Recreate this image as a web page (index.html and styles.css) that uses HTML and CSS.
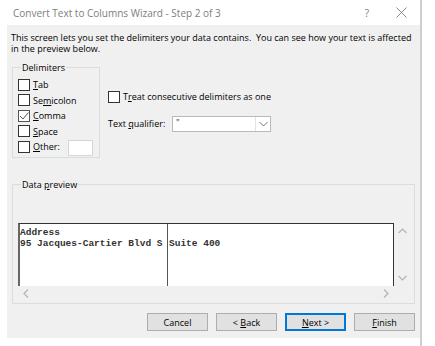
FILE: index.html
```html
<!DOCTYPE html>
<html lang="en">
<head>
  <meta charset="UTF-8">
  <title>Convert Text to Columns Wizard</title>
  <link rel="stylesheet" href="styles.css">
</head>
<body>
  <div class="screen">
    <div class="dialog">
      <!-- Title bar -->
      <div class="titlebar">
        <span class="title">Convert Text to Columns Wizard - Step 2 of 3</span>
        <span class="help">?</span>
        <svg class="close" width="11" height="11" viewBox="0 0 11 11">
          <path d="M0.5 0.5 L10.5 10.5 M10.5 0.5 L0.5 10.5" stroke="#8a8a8a" stroke-width="1" fill="none"/>
        </svg>
      </div>

      <div class="body">
        <p class="intro">This screen lets you set the delimiters your data contains.&nbsp; You can see how your text is affected in the preview below.</p>

        <div class="options">
          <fieldset class="group delims">
            <legend>Delimiters</legend>
            <div class="check"><span class="box"></span><span><u>T</u>ab</span></div>
            <div class="check"><span class="box"></span><span>Se<u>m</u>icolon</span></div>
            <div class="check"><span class="box checked">
              <svg width="10" height="10" viewBox="0 0 10 10"><path d="M1 5 L4 8 L9.5 1.5" stroke="#555" stroke-width="1" fill="none"/></svg>
            </span><span><u>C</u>omma</span></div>
            <div class="check"><span class="box"></span><span><u>S</u>pace</span></div>
            <div class="check"><span class="box"></span><span><u>O</u>ther:</span><span class="other-input"></span></div>
          </fieldset>

          <div class="side">
            <div class="check"><span class="box"></span><span>T<u>r</u>eat consecutive delimiters as one</span></div>
            <div class="qualifier">
              <span>Text <u>q</u>ualifier:</span>
              <div class="select">
                <span class="value">"</span>
                <span class="drop">
                  <svg width="9" height="6" viewBox="0 0 9 6"><path d="M0.5 1 L4.5 5 L8.5 1" stroke="#777" stroke-width="1" fill="none"/></svg>
                </span>
              </div>
            </div>
          </div>
        </div>

        <fieldset class="group preview">
          <legend>Data <u>p</u>review</legend>
          <div class="scroller">
            <div class="sheet">
              <div class="col first">
                <div>Address</div>
                <div>95 Jacques-Cartier Blvd S</div>
              </div>
              <div class="col">
                <div>&nbsp;</div>
                <div>Suite 400</div>
              </div>
            </div>
            <div class="vscroll">
              <svg width="9" height="6" viewBox="0 0 9 6"><path d="M0.5 5 L4.5 1 L8.5 5" stroke="#b4b4b4" stroke-width="1.2" fill="none"/></svg>
              <svg width="9" height="6" viewBox="0 0 9 6"><path d="M0.5 1 L4.5 5 L8.5 1" stroke="#b4b4b4" stroke-width="1.2" fill="none"/></svg>
            </div>
            <div class="hscroll">
              <svg width="6" height="9" viewBox="0 0 6 9"><path d="M5 0.5 L1 4.5 L5 8.5" stroke="#b4b4b4" stroke-width="1.2" fill="none"/></svg>
              <svg width="6" height="9" viewBox="0 0 6 9"><path d="M1 0.5 L5 4.5 L1 8.5" stroke="#b4b4b4" stroke-width="1.2" fill="none"/></svg>
            </div>
            <div class="corner"></div>
          </div>
        </fieldset>

        <div class="buttons">
          <button class="btn">Cancel</button>
          <button class="btn">&lt; <u>B</u>ack</button>
          <button class="btn default"><u>N</u>ext &gt;</button>
          <button class="btn"><u>F</u>inish</button>
        </div>
      </div>
    </div>
  </div>
</body>
</html>
```
FILE: styles.css
```css
:root {
  --face: #f0f0f0;
  --group-line: #dcdcdc;
  --text: #000000;
  --muted: #7d7d7d;
  --btn-bg: #e1e1e1;
  --btn-border: #adadad;
  --accent: #0078d7;
}

* {
  margin: 0;
  padding: 0;
  box-sizing: border-box;
}

body {
  background: #fff;
  font-family: 'Open Sans', 'Noto Sans', sans-serif;
  font-size: 9px;
  color: var(--text);
}

u {
  text-decoration: underline;
  text-underline-offset: 1px;
}

.screen {
  width: 422px;
  height: 346px;
  border-right: 2px solid #cfcfcf;
}

.dialog {
  margin-left: 7px;
  width: 413px;
}

/* Title bar */
.titlebar {
  height: 25px;
  display: flex;
  align-items: center;
  padding-left: 6px;
  background: #fff;
  color: var(--muted);
}

.title {
  font-size: 10px;
  flex: 1;
}

.help {
  font-size: 10px;
  margin-right: 27px;
}

.close {
  margin-right: 13px;
}

/* Body */
.body {
  background: var(--face);
  height: 313px;
  padding: 7px 5px 6px;
  display: flex;
  flex-direction: column;
}

.intro {
  line-height: 11px;
  margin-left: -1px;
}

.options {
  display: flex;
  margin-top: 8px;
}

.group {
  border: 1px solid var(--group-line);
  min-width: 0;
}

.group legend {
  line-height: 11px;
  padding: 0 1px;
  margin-left: 3px;
}

.delims {
  width: 88px;
  height: 96px;
  padding: 4px 0 0 5px;
}

.check {
  display: flex;
  align-items: center;
  height: 15.5px;
  gap: 3px;
  white-space: nowrap;
}

.box {
  width: 12px;
  height: 12px;
  border: 1px solid #333;
  background: #fff;
  display: flex;
  align-items: center;
  justify-content: center;
}

.box.checked {
  border-color: #555;
}

.other-input {
  width: 25px;
  height: 16px;
  background: #fff;
  border: 1px solid #d6d6d6;
  margin-left: 5px;
  margin-top: 3px;
}

.side {
  margin-left: 8px;
  padding-top: 27px;
  display: flex;
  flex-direction: column;
  gap: 11px;
}

.qualifier {
  display: flex;
  align-items: center;
}

.qualifier > span {
  width: 64px;
}

.select {
  width: 99px;
  height: 16px;
  display: flex;
  background: #fff;
  border: 1px solid #b9b9b9;
}

.select .value {
  flex: 1;
  padding-left: 3px;
  line-height: 12px;
  color: #333;
}

.select .drop {
  width: 15px;
  border-left: 1px solid #e3e3e3;
  display: flex;
  align-items: center;
  justify-content: center;
}

/* Data preview */
.preview {
  margin-top: 21px;
  padding: 33px 4px 3px 5px;
}

.scroller {
  display: grid;
  grid-template-columns: 376px 16px;
  grid-template-rows: 63px 14px;
}

.sheet {
  background: #fff;
  border-top: 1px solid #333;
  border-left: 2px solid #666;
  border-right: 1px solid #333;
  display: flex;
  font-family: 'Liberation Mono', monospace;
  font-size: 9.5px;
  font-weight: bold;
  line-height: 11px;
  color: #333;
}

.col {
  white-space: nowrap;
  padding-top: 3px;
  padding-left: 1px;
}

.col.first {
  width: 148px;
  padding-left: 0;
  border-right: 1px solid #555;
}

.vscroll {
  display: flex;
  flex-direction: column;
  justify-content: space-between;
  align-items: center;
  padding: 5px 0;
}

.hscroll {
  display: flex;
  justify-content: space-between;
  align-items: center;
  padding: 0 5px;
}

/* Buttons */
.buttons {
  display: flex;
  justify-content: flex-end;
  gap: 8px;
  margin-top: 9px;
}

.btn {
  width: 61px;
  height: 18px;
  background: var(--btn-bg);
  border: 1px solid var(--btn-border);
  font-family: 'Open Sans', 'Noto Sans', sans-serif;
  font-size: 9px;
  color: var(--text);
}

.btn.default {
  border: 2px solid var(--accent);
}
```
